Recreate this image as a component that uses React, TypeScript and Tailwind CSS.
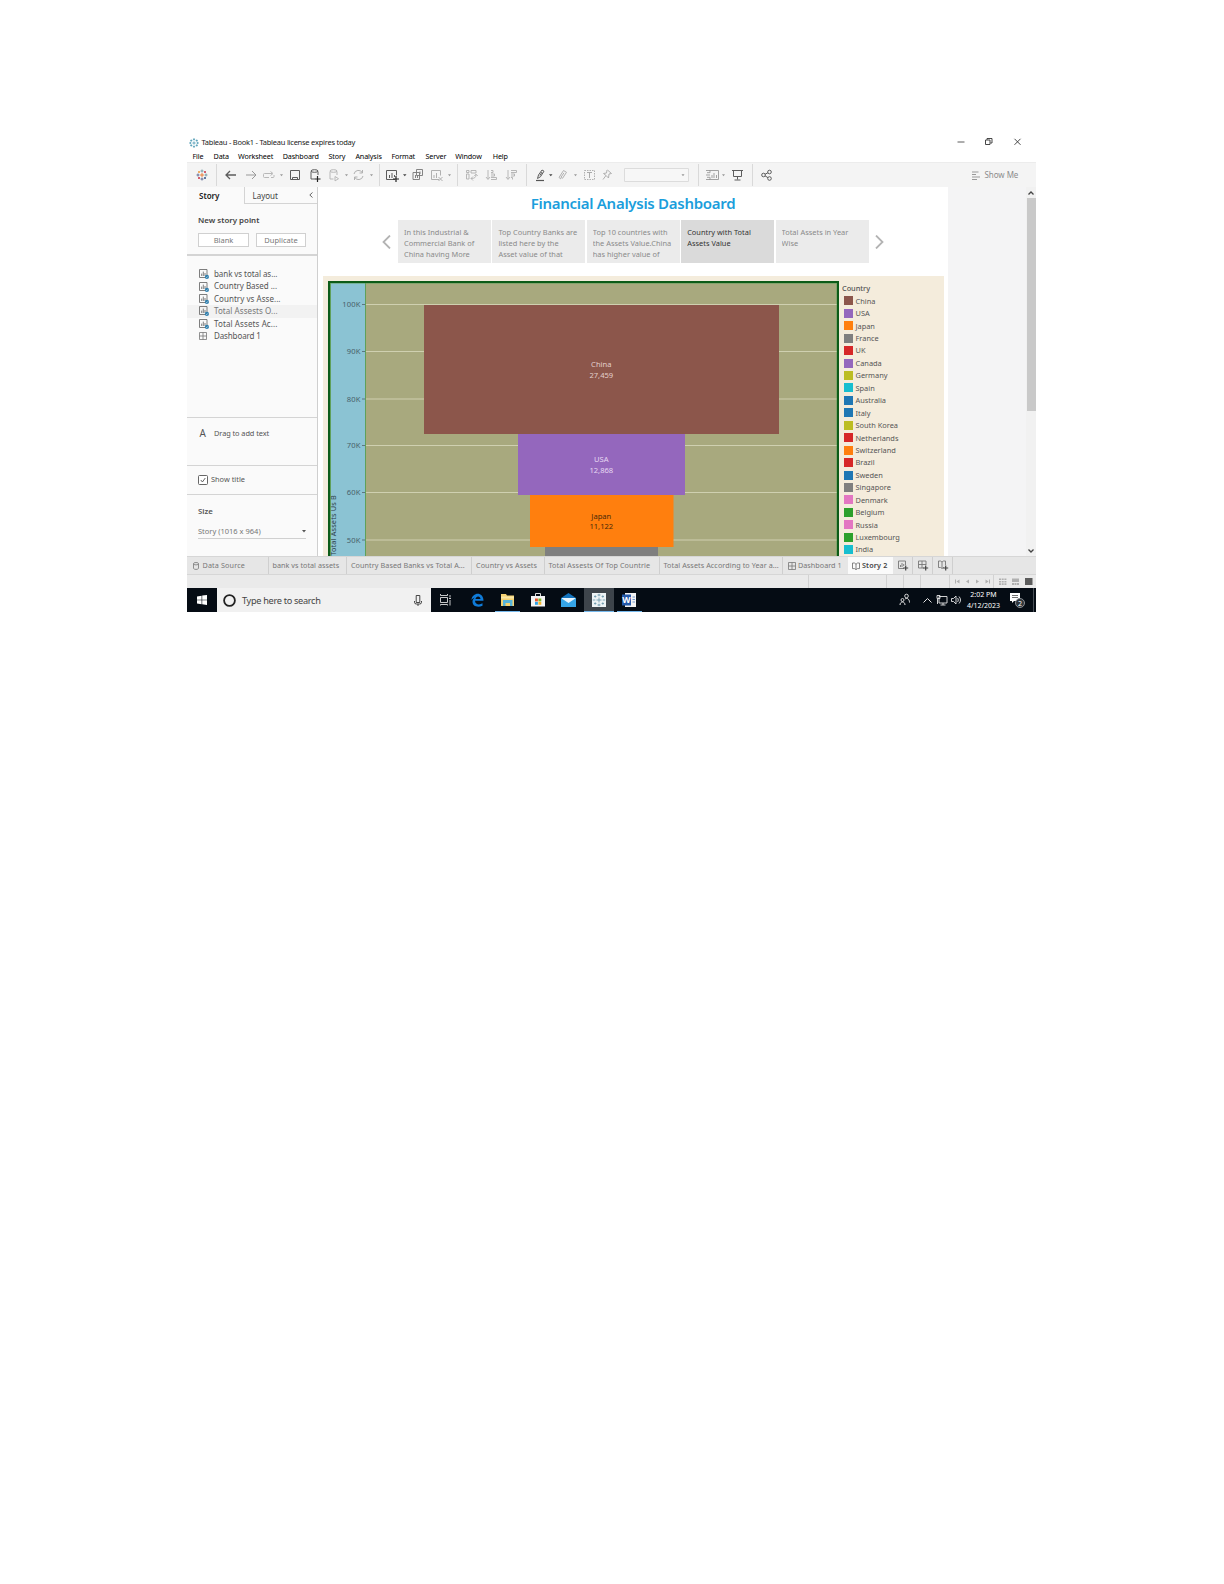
import React from "react";

const S = ({ w, h, vb, c = "", children }: { w: number; h: number; vb?: string; c?: string; children: React.ReactNode }) => (
  <svg width={w} height={h} viewBox={vb ?? `0 0 ${w} ${h}`} className={"block shrink-0 " + c} fill="none" stroke="currentColor" strokeWidth="1">
    {children}
  </svg>
);

const TableauMark = ({ size, mono = "" }: { size: number; mono?: string }) => {
  const cross = (x: number, y: number, r: number, col: string) => (
    <path d={`M${x - r} ${y}h${2 * r}M${x} ${y - r}v${2 * r}`} stroke={mono || col} strokeWidth="1" />
  );
  return (
    <S w={size} h={size} vb="0 0 12 12">
      {cross(6, 6, 1.9, "#e8762d")}
      {cross(6, 1.6, 1.3, "#7099a6")}
      {cross(6, 10.4, 1.3, "#5b6591")}
      {cross(1.6, 6, 1.3, "#5b6591")}
      {cross(10.4, 6, 1.3, "#7099a6")}
      {cross(2.7, 3.1, 1.3, "#eb912c")}
      {cross(9.3, 3.1, 1.3, "#c72037")}
      {cross(2.7, 8.9, 1.3, "#c72037")}
      {cross(9.3, 8.9, 1.3, "#1f447e")}
    </S>
  );
};

const SheetIcon = () => (
  <S w={10} h={10} c="text-[#6f6f6f]">
    <path d="M.5.5h7.5v8H.5z" strokeWidth=".9" />
    <path d="M2.7 7V4.6M4.3 7V2.6M6 7V4" strokeWidth=".9" />
    <circle cx="7.9" cy="7.9" r="2.1" fill="#2f7fae" stroke="none" />
    <path d="M6.9 7.9l.8.8 1.2-1.4" stroke="#fff" strokeWidth=".5" />
  </S>
);

const GridIcon = () => (
  <S w={8} h={8} c="text-[#777]"><path d="M.5.5h7v7h-7zM4 .5v7M.5 4h7" strokeWidth=".8" /></S>
);
const BookIcon = () => (
  <S w={8} h={8} c="text-[#666]"><path d="M.5 1h2L4 2.2 5.5 1h2v5.6h-2L4 7.6 2.5 6.6h-2zM4 2v5.5" strokeWidth=".8" /></S>
);

const menus: [string, string][] = [
  ["File", "w-[21px]"], ["Data", "w-[24.5px]"], ["Worksheet", "w-[44.7px]"], ["Dashboard", "w-[45.7px]"], ["Story", "w-[27px]"],
  ["Analysis", "w-[36px]"], ["Format", "w-[34px]"], ["Server", "w-[29.8px]"], ["Window", "w-[37.5px]"], ["Help", "w-[20px]"],
];

function TitleBar() {
  return (
    <div className="h-[26px] bg-white font-['Noto_Sans'] text-black">
      <div className="flex h-[13px] items-center">
        <div className="ml-[2px]"><TableauMark size={10} mono="#4f9bb5" /></div>
        <div className="ml-[2.5px] w-[740px] text-[7.5px] leading-[13px] tracking-[-0.24px] text-[#222]">Tableau - Book1 - Tableau license expires today</div>
        <S w={90} h={11} c="ml-[21px] text-[#333]">
          <path d="M12 5.5h7" strokeWidth=".8" transform="translate(-.5 -.5)" />
          <path d="M40 3.5h4.5v4.5H40zM41.500 3.300V2h5v4.500h-1.600" strokeWidth=".9" transform="translate(-.5 -.5)" />
          <path d="M69 2.500l6 6M75 2.500l-6 6" strokeWidth=".9" transform="translate(-.5 -.7)" />
        </S>
      </div>
      <div className="flex h-[13px] items-center pl-[5px] pt-[2px] text-[7.2px] leading-[13px] tracking-[-0.12px]">
        {menus.map(([m, w]) => <div key={m} className={"shrink-0 whitespace-nowrap pl-[0.5px] " + w}>{m}</div>)}
      </div>
    </div>
  );
}

function Toolbar() {
  return (
    <div className="flex h-[25px] items-center border-t border-[#ececec] bg-[#f4f4f4]">
      <S w={780} h={24} c="text-[#5c5c5c]">
        <path d="M29.500 1v22M192.500 1v22M270.500 1v22M339.500 1v22M511.500 1v22M565.500 1v22" stroke="#d9d9d9" />
        <g strokeWidth=".9">
          <path d="M13 12h4M15 10v4" stroke="#e8762d" />
          <path d="M15 6.500v3M13.500 8h3" stroke="#7099a6" /><path d="M15 14.500v3M13.500 16h3" stroke="#5b6591" />
          <path d="M9.500 12h3M11 10.500v3" stroke="#5b6591" /><path d="M17.500 12h3M19 10.500v3" stroke="#7099a6" />
          <path d="M11 9h2M12 8v2" stroke="#eb912c" /><path d="M17 9h2M18 8v2" stroke="#c72037" />
          <path d="M11 15h2M12 14v2" stroke="#c72037" /><path d="M17 15h2M18 14v2" stroke="#1f447e" />
        </g>
        <path d="M49 12H39M43 8l-4 4 4 4" strokeWidth="1.300" />
        <path d="M59 12h10M65 8l4 4-4 4" stroke="#999" />
        <path d="M82 14.500h-4.500q-1 0-1-1v-2q0-1 1-1H85M83.500 8.500l2.500 2-2.500 2M84 14.500h2q1 0 1-1V12" stroke="#b8b8b8" />
        <path d="M103.500 7.500h9v9h-9zM105.500 16.500v-2h5v2" />
        <g><path d="M124 8.500V16h3.500M131 12V8.500" /><ellipse cx="127.500" cy="8" rx="3.500" ry="1.300" /><path d="M130.500 13v6M127.500 16h6" stroke="#222" strokeWidth="1.200" /></g>
        <g stroke="#b8b8b8"><path d="M143 8.500V16h3.500M150 12V8.500" /><ellipse cx="146.500" cy="8" rx="3.500" ry="1.300" /><path d="M148 13.500l3.500 2.200-3.500 2.200z" /></g>
        <path d="M167 11a4.500 4.500 0 0 1 8.500-1M176 13a4.500 4.500 0 0 1-8.500 1M175.500 7v3h-3M167.500 17v-3h3" stroke="#b0b0b0" />
        <path d="M208 16.500h-8.500v-9h10v5M202.500 15v-3M205 15v-5M207.500 14v-2" />
        <path d="M209 13v6M206 16h6" stroke="#222" strokeWidth="1.200" />
        <path d="M229.500 6.500h6v6h-6zM226 9.500h6.500v7H226zM228.500 15v-3M230.500 15v-2.500M233 11V8.500" stroke="#777" strokeWidth=".9" />
        <path d="M252 16.500h-7.500v-9h9v5M247 15v-3M249.500 15v-5M251.500 14l4 4M255.500 14l-4 4" stroke="#b0b0b0" />
        <g stroke="#b0b0b0">
          <path d="M279.500 11h2.500v5h-2.500zM279.500 7.500h2.500v2h-2.500zM284 7.500h5v2.500h-5zM289 11.500c0 3-1.500 4-5 4M286 13.500l-2 2 2 2M287.300 13l1.700-1.800 1.700 1.800" strokeWidth=".9" />
          <path d="M301 7v9M299 14l2 2.500 2-2.500M304 7.500h2v2h-2M304 11h3.500v2H304M304 14.500h5.500v2H304" strokeWidth=".9" />
          <path d="M321 7v9M319 14l2 2.500 2-2.500M324 7.500h5.500v2H324M324 11h3.500v2H324M324 14.500h1.500v2" strokeWidth=".9" />
        </g>
        <path d="M349 17.500h8" stroke="#555" strokeWidth="1.200" /><path d="M350.500 15.500l1-3.500 3.500-5 2 1.200-3.500 5.500-3 1.800M353 12.500l2-3.500" />
        <path d="M374 16l-2-1.500 4.500-7 3 1.800-4 6-1.600-.9 3-4.500" stroke="#b0b0b0" />
        <path d="M397.500 7.500h10v9h-10z" stroke="#b0b0b0" strokeDasharray="1.500 1" /><path d="M400 9.500h5M402.500 9.500v5.500" stroke="#aaa" />
        <path d="M419.500 7l4 3.500-2.500.5-.5 4-2.500-2.500-3 4M418 12.500l-2.500-2 3-.500.500-3" stroke="#b0b0b0" transform="translate(1 0)" />
        <path d="M437.500 5.500h64v13h-64z" stroke="#dcdcdc" fill="#f7f7f7" />
        <path d="M522 7.500h9.500v9H522M519 7.500h4v2.200h-3M519 12h4M519 16.500h4v-2.200h-3M525 15v-3M527 15v-5M529.500 15v-3" stroke="#999" strokeWidth=".9" />
        <path d="M545 7.500h11M546.500 7.500v6h8v-6M550.500 13.500v3M547.500 17h6" />
        <g><circle cx="576.500" cy="12" r="1.800" /><circle cx="582.500" cy="9" r="1.800" /><circle cx="582.500" cy="15.500" r="1.800" /><path d="M578 11.300l3-1.600M578 12.800l3 1.900" /></g>
        <g fill="#999" stroke="none">
          <path d="M93 11.200h3l-1.500 2zM158 11.200h3l-1.500 2zM183 11.200h3l-1.500 2zM261 11.200h3l-1.500 2zM387 11.200h3l-1.500 2zM494.500 11.200h3l-1.500 2zM535 11.200h3l-1.500 2z" />
          <path d="M216 11.200h3.500l-1.700 2zM362 11.200h3.500l-1.700 2z" fill="#444" />
        </g>
      </S>
      <S w={9} h={9} c="ml-[5px] text-[#999]"><path d="M0 1h6.500M0 3.500h4M0 6h8M0 8.500h5" strokeWidth="1.200" /></S>
      <div className="ml-[3.500px] font-['Noto_Sans'] text-[8px] tracking-[-0.05px] text-[#8c8c8c]">Show Me</div>
    </div>
  );
}

const sheets: [string, string][] = [
  ["bank vs total as...", "tracking-[-0.07px]"], ["Country Based ...", "tracking-[-0.03px]"], ["Country vs Asse...", "tracking-[0.04px]"],
  ["Total Assests O...", "tracking-[0.06px]"], ["Total Assets Ac...", "tracking-[0.1px]"],
];

function Sidebar() {
  return (
    <div className="flex w-[131px] shrink-0 flex-col border-r border-[#cfcfcf] bg-[#fafafa] text-[#555]">
      <div className="flex h-[17px] text-[8px] leading-[17px]">
        <div className="w-[57px] pl-[12px] font-semibold text-[#222]">Story</div>
        <div className="flex flex-1 items-center border-b border-l border-[#d4d4d4] pl-[7.500px] text-[#444]">
          <div className="w-[56px]">Layout</div>
          <S w={4} h={6} c="text-[#555]"><path d="M3.500.500L.8 3l2.700 2.500" strokeWidth=".9" /></S>
        </div>
      </div>
      <div className="h-[52px] border-b-2 border-[#d4d4d4] pl-[11px]">
        <div className="pt-[10px] text-[7.9px] font-semibold leading-[12px] text-[#444]">New story point</div>
        <div className="mt-[7px] flex gap-[7px] text-center text-[7.5px] leading-[12px] text-[#777]">
          <div className="h-[14px] w-[51px] border border-[#d0d0d0] bg-white">Blank</div>
          <div className="h-[14px] w-[50px] border border-[#d0d0d0] bg-white">Duplicate</div>
        </div>
      </div>
      <div className="h-[162px] border-b border-[#d4d4d4] pt-[12px] text-[8px] leading-[12.4px]">
        {sheets.map(([s, t], i) => (
          <div key={s} className={"flex h-[12.4px] items-center pl-[12px] " + (i === 3 ? "bg-[#f2f2f2] text-[#777]" : "")}>
            <SheetIcon /><span className={"ml-[5px] whitespace-nowrap " + t}>{s}</span>
          </div>
        ))}
        <div className="flex h-[12.4px] items-center pl-[12px]"><GridIcon /><span className="ml-[7px] tracking-[-0.12px]">Dashboard 1</span></div>
      </div>
      <div className="flex h-[48px] items-start border-b border-[#d4d4d4] pl-[12.500px] pt-[9px] leading-[12px]">
        <span className="w-[14.500px] text-[10px]">A</span><span className="text-[7.4px] tracking-[-0.08px]">Drag to add text</span>
      </div>
      <div className="flex h-[29px] items-center border-b border-[#d4d4d4] pl-[11px] text-[7.4px]">
        <S w={10} h={10} c="text-[#555]"><rect x=".5" y=".5" width="9" height="9" rx="1" strokeWidth=".9" fill="#fff" /><path d="M2.800 5l1.600 2L7.300 3" strokeWidth=".9" /></S>
        <span className="ml-[3px]">Show title</span>
      </div>
      <div className="pl-[11px] pt-[10px]">
        <div className="text-[7.8px] font-semibold leading-[12px]">Size</div>
        <div className="mt-[7px] flex h-[15px] w-[108px] items-center justify-between border-b border-[#d0d0d0] text-[7.5px] leading-[12px] text-[#777]">
          <span className="whitespace-nowrap">Story (1016 x 964)</span><S w={4} h={3} c="text-[#555]"><path d="M0 0h4L2 2.500z" fill="currentColor" stroke="none" /></S>
        </div>
      </div>
    </div>
  );
}

const points = [
  ["In this Industrial &", "Commercial Bank of", "China having More"],
  ["Top Country Banks are", "listed here by the", "Asset value of that"],
  ["Top 10 countries with", "the Assets Value.China", "has higher value of"],
  ["Country with Total", "Assets Value"],
  ["Total Assets in Year", "Wise"],
];

const legend: [string, string][] = [
  ["China", "bg-[#8c564b]"], ["USA", "bg-[#9467bd]"], ["Japan", "bg-[#ff7f0e]"], ["France", "bg-[#7f7f7f]"], ["UK", "bg-[#d62728]"],
  ["Canada", "bg-[#9467bd]"], ["Germany", "bg-[#bcbd22]"], ["Spain", "bg-[#17becf]"], ["Australia", "bg-[#1f77b4]"], ["Italy", "bg-[#1f77b4]"],
  ["South Korea", "bg-[#bcbd22]"], ["Netherlands", "bg-[#d62728]"], ["Switzerland", "bg-[#ff7f0e]"], ["Brazil", "bg-[#d62728]"], ["Sweden", "bg-[#1f77b4]"],
  ["Singapore", "bg-[#7f7f7f]"], ["Denmark", "bg-[#e377c2]"], ["Belgium", "bg-[#2ca02c]"], ["Russia", "bg-[#e377c2]"], ["Luxembourg", "bg-[#2ca02c]"], ["India", "bg-[#17becf]"],
];

const ticks: [string, number][] = [["100K", 23.500], ["90K", 70.500], ["80K", 118], ["70K", 164.500], ["60K", 211.500], ["50K", 259]];

function Chart() {
  return (
    <svg width="511" height="275" viewBox="0 0 511 275" className="block shrink-0" fontFamily="Noto Sans, sans-serif" fontSize="7.2">
      <rect width="511" height="290" fill="#0d5c18" />
      <rect x="2" y="2" width="507" height="290" fill="#5fa05a" />
      <rect x="3" y="2.500" width="34" height="290" fill="#8bc3d3" />
      <rect x="38" y="2.500" width="470.500" height="290" fill="#a8a97e" />
      {ticks.map(([t, y]) => (
        <g key={t}>
          <rect x="38" y={y - 0.5} width="470.500" height="1" fill="#cfd0b0" />
          <rect x="34" y={y - 0.5} width="3" height="1" fill="#5c7780" />
          <text x="32.500" y={y + 2.700} textAnchor="end" fontSize="7.600" letterSpacing=".1" fill="#48606a">{t}</text>
        </g>
      ))}
      <rect x="96" y="24" width="355" height="129" fill="#8c564b" />
      <rect x="190" y="153" width="167" height="61" fill="#9467bd" />
      <rect x="202" y="214" width="143.500" height="52" fill="#ff7f0e" />
      <rect x="217" y="266" width="113" height="20" fill="#7f7f7f" />
      <g textAnchor="middle" fontSize="7.600">
        <g fill="#e2cfcb"><text x="273.300" y="86">China</text><text x="273.300" y="96.500">27,459</text></g>
        <g fill="#e6d8f2"><text x="273.300" y="181">USA</text><text x="273.300" y="191.500">12,868</text></g>
        <g fill="#4a2a08"><text x="273.300" y="237.500">Japan</text><text x="273.300" y="248">11,122</text></g>
      </g>
      <text transform="translate(8 274.800) rotate(-90)" fill="#2c3f48" fontSize="7.300" textLength="60.500">Total Assets Us B</text>
    </svg>
  );
}

function Story() {
  return (
    <div className="flex w-[630px] shrink-0 flex-col overflow-hidden bg-white">
      <div className="h-[33px] text-center text-[15px] font-semibold leading-[33px] tracking-[-0.28px] text-[#1b9edc]">Financial Analysis Dashboard</div>
      <div className="flex h-[43px] shrink-0 items-center pl-[64px]">
        <S w={9} h={14} c="mr-[7px] text-[#b3b3b3]"><path d="M8 .500L1.500 7 8 13.500" strokeWidth="1.800" /></S>
        <div className="flex gap-[1.400px]">
          {points.map((p, i) => (
            <div key={i} className={"h-[43px] w-[93px] pl-[6px] pt-[7px] text-[7.400px] leading-[11.200px] tracking-[0.02px] " + (i === 3 ? "bg-[#dadada] text-[#333]" : "bg-[#ebebeb] text-[#8a8a8a]")}>
              <div className="h-[33px] overflow-hidden">{p.map((l) => <div key={l} className="whitespace-nowrap">{l}</div>)}</div>
            </div>
          ))}
        </div>
        <S w={9} h={14} c="ml-[6px] text-[#b3b3b3]"><path d="M1 .500L7.500 7 1 13.500" strokeWidth="1.800" /></S>
      </div>
      <div className="ml-[5px] mt-[13px] flex h-[280px] w-[621px] shrink-0 bg-[#f4ecdc] pl-[5px] pt-[5px]">
        <Chart />
        <div className="pl-[3px] pt-[1.300px] text-[7.400px] text-[#555]">
          <div className="h-[12.400px] font-medium leading-[12.400px] tracking-[-0.05px]">Country</div>
          {legend.map(([n, c]) => (
            <div key={n} className="flex h-[12.450px] items-center pl-[2px] leading-[12.400px]">
              <div className={"h-[9px] w-[8.500px] " + c} /><span className="ml-[3px] whitespace-nowrap">{n}</span>
            </div>
          ))}
        </div>
      </div>
    </div>
  );
}

const tabs: [string, string][] = [
  ["bank vs total assets", "w-[78.500px] tracking-[0.04px]"], ["Country Based Banks vs Total A...", "w-[125px] tracking-[0.08px]"], ["Country vs Assets", "w-[72.500px] tracking-[0.1px]"],
  ["Total Assests Of Top Countrie", "w-[115px] tracking-[0.11px]"], ["Total Assets According to Year a...", "w-[123.500px] tracking-[0.08px]"],
];

function Tabs() {
  return (
    <div className="flex h-[19px] border-b border-t border-[#d6d6d6] bg-[#e6e6e6] text-[7.200px] leading-[17px] text-[#777]">
      <div className="flex w-[81.500px] shrink-0 items-center border-r border-[#cfcfcf] pl-[6px]">
        <S w={6} h={8} c="text-[#777]"><ellipse cx="3" cy="1.700" rx="2.500" ry="1.200" strokeWidth=".8" /><path d="M.5 1.700v4.600c0 1.500 5 1.500 5 0V1.700" strokeWidth=".8" /></S>
        <span className="ml-[3.500px] tracking-[0.15px]">Data Source</span>
      </div>
      {tabs.map(([t, w]) => <div key={t} className={"shrink-0 overflow-hidden whitespace-nowrap border-r border-[#cfcfcf] pl-[4px] " + w}>{t}</div>)}
      <div className="flex w-[65px] shrink-0 items-center pl-[5px]"><GridIcon /><span className="ml-[2px] whitespace-nowrap tracking-[0.04px]">Dashboard 1</span></div>
      <div className="flex w-[44.500px] shrink-0 items-center bg-[#fafafa] pl-[4px] font-semibold text-[#444]"><BookIcon /><span className="ml-[2px] whitespace-nowrap tracking-[0.15px]">Story 2</span></div>
      {[0, 1, 2].map((i) => (
        <div key={i} className="flex w-[20px] shrink-0 items-center border-r border-[#cfcfcf] pl-[5px]">
          <S w={11} h={11} c="text-[#777]">
            {i === 0 && <path d="M6 8.500H.5v-7.500h7V5M2.500 7V5M4 7V3M5.700 6V4" strokeWidth=".9" />}
            {i === 1 && <path d="M6 8H.5V1h7.500v4M4 1v7M.5 4.500H8" strokeWidth=".9" />}
            {i === 2 && <path d="M6 7.500L4 8.500 2.500 7.500h-2V1h2L4 2l1.500-1h2v4M4 2v6" strokeWidth=".9" />}
            <path d="M7.700 5.500v5M5.200 8h5" stroke="#444" strokeWidth="1.200" />
          </S>
        </div>
      ))}
    </div>
  );
}

function StatusBar() {
  return (
    <div className="flex h-[13px] justify-end bg-[#eaeaea]">
      <S w={230} h={13}>
        <path d="M2.500 0v13M80.500 0v13M97.500 0v13M114.500 0v13M143.500 0v13M187.500 0v13" stroke="#d2d2d2" />
        <g fill="#b0b0b0" stroke="none">
          <path d="M149 4.500h1v4h-1zM153.500 4.500v4l-3-2zM163 4.500v4l-3-2zM170 4.500v4l3-2zM179.500 4.500v4l3-2zM183 4.500h1v4h-1z" />
          <path d="M193 3.500h2v1.600h-2zM195.700 3.500h2v1.600h-2zM198.400 3.500h2v1.600h-2zM193 5.900h2v1.600h-2zM195.700 5.900h2v1.600h-2zM198.400 5.900h2v1.600h-2zM193 8.300h2v1.600h-2zM195.700 8.300h2v1.600h-2zM198.400 8.300h2v1.600h-2zM206 3.500h7v3.500h-7zM206 8h2v2h-2zM208.500 8h2v2h-2zM211 8h2v2h-2z" />
          <path d="M219 3h7.500v7H219z" fill="#5c5c5c" />
        </g>
      </S>
    </div>
  );
}

function Taskbar() {
  return (
    <div className="flex h-[24px] bg-[#050c14] font-['Noto_Sans'] text-white">
      <div className="flex w-[30px] shrink-0 items-center justify-center">
        <S w={10} h={10}><path d="M0 1.400l4.600-.7v4H0zM5.200.600L10 0v4.700H5.200zM0 5.300h4.600v4L0 8.600zM5.200 5.300H10V10l-4.800-.7z" fill="#fff" stroke="none" /></S>
      </div>
      <div className="flex w-[214px] shrink-0 items-center bg-[#f1f1f1] text-[#444]">
        <S w={13} h={13} c="ml-[6px] text-[#222]"><circle cx="6.500" cy="6.500" r="5.400" strokeWidth="1.800" /></S>
        <div className="ml-[6px] w-[172px] pt-[1px] text-[9.200px] leading-[22px] tracking-[-0.32px]">Type here to search</div>
        <S w={8} h={11} c="text-[#333]"><path d="M2.200.500h3.600v7H2.200zM.5 6v1.500q0 1.500 2 1.500h3q2 0 2-1.500V6M4 9v2" strokeWidth=".9" /></S>
      </div>
      <S w={220} h={24}>
        <path d="M9.500 9.500h7v5h-7zM9.500 6v1.500h7V6M9.500 17.500v-1h7v1M19 7v2.500M19 12v5.500M18 10.500h2" stroke="#ddd" strokeWidth=".9" />
        <path d="M40.500 12c.5-8 12-9 12 .8H44c.3 4 4.500 4.500 7.500 2.500v2.500c-5 2-10 .5-10-4 0-2 1-3.500 3-4.500-1.500.5-3 1.400-4 2.700zM44.500 11h5c0-3.500-4.600-3.500-5 0z" fill="#0f7bd8" fillRule="evenodd" stroke="none" />
        <g stroke="none">
          <path d="M70 6h5l1 1.500h7V18H70z" fill="#f5d272" /><path d="M72 12h9.500v6h-2.500v-3h-4.500v3H72z" fill="#57b4d9" /><path d="M70 8.500h13v2H70z" fill="#fbe7a5" />
          <path d="M100 8h14v10.500h-14z" fill="#f4f4f4" />
          <path d="M104 10.500h2.900v2.900H104z" fill="#e8552d" /><path d="M107.400 10.500h2.900v2.900h-2.900z" fill="#7eb52c" /><path d="M104 13.900h2.900v2.900H104z" fill="#2da3e8" /><path d="M107.400 13.900h2.900v2.900h-2.900z" fill="#f8b62c" />
          <path d="M130 10l7.500-5 7.500 5v9h-15z" fill="#1373bd" /><path d="M131 10h13.500v7H131z" fill="#e8f4fc" /><path d="M130 10l7.500 5 7.500-5v9h-15z" fill="#35a5e8" />
          <path d="M153 0h30v24h-30z" fill="#3d444b" /><path d="M161 5h14v14h-14z" fill="#edf3f6" />
          <path d="M194 5h11v14h-11z" fill="#f2f2f2" /><path d="M191 6.500h9v11h-9z" fill="#2459a9" />
          <path d="M64 23h25v1H64zM153 23h30v1h-30zM186 23h25v1h-25z" fill="#76b9ed" />
        </g>
        <path d="M104.500 8V5.500h5V8" stroke="#ddd" />
        <path d="M165.500 12h5M168 9.500v5M166.500 7h3M168 5.800v2.500M166.500 17h3M168 15.700v2.500M161.800 12h2.500M171.700 12h2.500M163 8.500h2.400M164.200 7.300v2.400M170.600 8.500h2.400M171.800 7.300v2.400M163 15.500h2.400M164.200 14.300v2.400M170.600 15.500h2.400M171.800 14.300v2.400" stroke="#6795aa" strokeWidth=".8" />
        <text x="191.300" y="15.200" fill="#fff" stroke="none" fontSize="8.500" fontWeight="700" fontFamily="Noto Sans">W</text>
        <path d="M201.500 9h2.500M201.500 11.500h2.500M201.500 14h2.500" stroke="#4d7cc0" strokeWidth=".8" />
      </S>
      <div className="flex flex-1 items-center justify-end">
        <S w={66} h={16} c="mr-[1px] text-[#e6e6e6]">
          <circle cx="8.500" cy="4" r="1.800" strokeWidth=".9" /><circle cx="4.500" cy="8" r="1.500" strokeWidth=".9" />
          <path d="M7 7c2-1.500 4.500 0 4.500 3.500M2 13c0-4 5-4 5 0M25.500 10.500L29.500 6.500 33.500 10.500" strokeWidth="1" />
          <path d="M41 4.500h8v6.500h-8zM39 3.500h3v3h-3zM45 11v2M42.500 13h5M39.500 7v5" strokeWidth=".9" />
          <path d="M53.500 6.500h2L58 4v8L55.500 9.500h-2zM59.500 6c1 1 1 3 0 4M61 4.500c2 2 2 5 0 7" strokeWidth=".9" />
        </S>
        <div className="ml-[1px] w-[36px] text-center text-[7px] leading-[11px]"><div>2:02 PM</div><div>4/12/2023</div></div>
        <div className="relative ml-[8.500px] mr-[13px] h-[16px] w-[10px]">
          <S w={10} h={11} c="mt-[1px]"><path d="M0 0h10v8H4L2 10V8H0z" fill="#fff" stroke="none" /><path d="M2 2.500h6M2 4.500h6" stroke="#333" strokeWidth=".7" /></S>
          <div className="absolute left-[5px] top-[6px] flex h-[10px] w-[10px] items-center justify-center rounded-full border border-[#8a8f94] bg-[#30363c] text-[7px] leading-none">2</div>
        </div>
        <div className="mr-[2px] h-[24px] w-px bg-[#4a5057]" />
      </div>
    </div>
  );
}

export default function App() {
  return (
    <div className="min-h-[1584px] w-[1224px] overflow-hidden bg-white pl-[187px] pt-[136px] font-['Noto_Sans']">
      <div className="flex w-[849px] flex-col">
        <TitleBar />
        <Toolbar />
        <div className="flex h-[369px] overflow-hidden bg-[#f4f4f5]">
          <Sidebar />
          <Story />
          <div className="flex-1" />
          <div className="flex w-[10px] flex-col items-center bg-[#f1f1f1]">
            <div className="flex h-[11px] items-center"><S w={6} h={4} c="text-[#444]"><path d="M.5 3.500L3 1l2.500 2.500" strokeWidth="1.300" /></S></div>
            <div className="h-[213px] w-[9px] bg-[#c9c9c9]" />
            <div className="flex-1" />
            <div className="flex h-[11px] items-center"><S w={6} h={4} c="text-[#444]"><path d="M.5.500L3 3 5.500.500" strokeWidth="1.300" /></S></div>
          </div>
        </div>
        <Tabs />
        <StatusBar />
        <Taskbar />
      </div>
    </div>
  );
}
